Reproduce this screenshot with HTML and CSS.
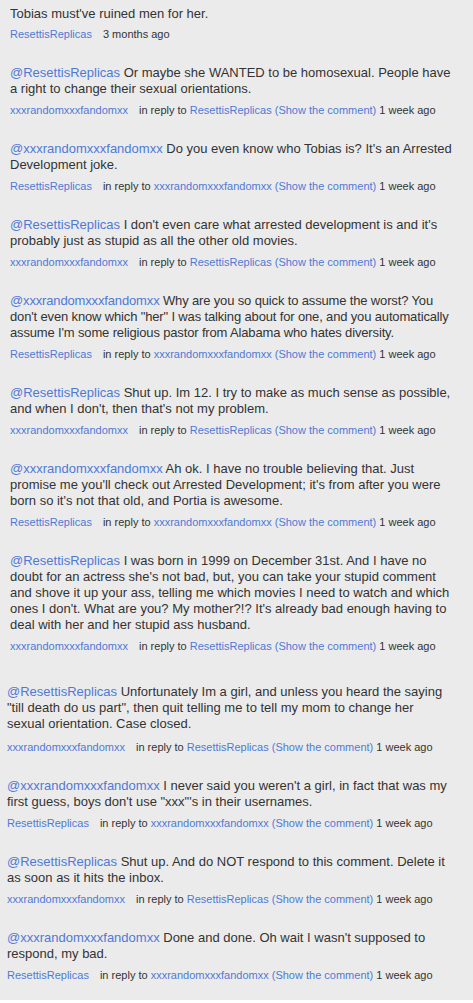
FILE: index.html
```html
<!DOCTYPE html>
<html>
<head>
<meta charset="utf-8">
<link rel="stylesheet" href="styles.css">
</head>
<body>
<div class="page">
  <section class="thread">
    <div class="comment first">
      <p class="text">Tobias must've ruined men for her.</p>
      <div class="meta"><a class="author">ResettisReplicas</a><span class="time">3 months ago</span></div>
    </div>
    <div class="comment">
      <p class="text"><a class="mention">@ResettisReplicas</a> Or maybe she WANTED to be homosexual. People have a right to change their sexual orientations.</p>
      <div class="meta"><a class="author">xxxrandomxxxfandomxx</a>in reply to <a>ResettisReplicas</a> <a>(Show the comment)</a> 1 week ago</div>
    </div>
    <div class="comment">
      <p class="text"><a class="mention">@xxxrandomxxxfandomxx</a> Do you even know who Tobias is? It's an Arrested Development joke.</p>
      <div class="meta"><a class="author">ResettisReplicas</a>in reply to <a>xxxrandomxxxfandomxx</a> <a>(Show the comment)</a> 1 week ago</div>
    </div>
    <div class="comment">
      <p class="text"><a class="mention">@ResettisReplicas</a> I don't even care what arrested development is and it's probably just as stupid as all the other old movies.</p>
      <div class="meta"><a class="author">xxxrandomxxxfandomxx</a>in reply to <a>ResettisReplicas</a> <a>(Show the comment)</a> 1 week ago</div>
    </div>
    <div class="comment">
      <p class="text tight"><a class="mention">@xxxrandomxxxfandomxx</a> Why are you so quick to assume the worst? You don't even know which "her" I was talking about for one, and you automatically assume I'm some religious pastor from Alabama who hates diversity.</p>
      <div class="meta"><a class="author">ResettisReplicas</a>in reply to <a>xxxrandomxxxfandomxx</a> <a>(Show the comment)</a> 1 week ago</div>
    </div>
    <div class="comment">
      <p class="text"><a class="mention">@ResettisReplicas</a> Shut up. Im 12. I try to make as much sense as possible, and when I don't, then that's not my problem.</p>
      <div class="meta"><a class="author">xxxrandomxxxfandomxx</a>in reply to <a>ResettisReplicas</a> <a>(Show the comment)</a> 1 week ago</div>
    </div>
    <div class="comment">
      <p class="text"><a class="mention">@xxxrandomxxxfandomxx</a> Ah ok. I have no trouble believing that. Just promise me you'll check out Arrested Development; it's from after you were born so it's not that old, and Portia is awesome.</p>
      <div class="meta"><a class="author">ResettisReplicas</a>in reply to <a>xxxrandomxxxfandomxx</a> <a>(Show the comment)</a> 1 week ago</div>
    </div>
    <div class="comment">
      <p class="text"><a class="mention">@ResettisReplicas</a> I was born in 1999 on December 31st. And I have no doubt for an actress she's not bad, but, you can take your stupid comment and shove it up your ass, telling me which movies I need to watch and which ones I don't. What are you? My mother?!? It's already bad enough having to deal with her and her stupid ass husband.</p>
      <div class="meta"><a class="author">xxxrandomxxxfandomxx</a>in reply to <a>ResettisReplicas</a> <a>(Show the comment)</a> 1 week ago</div>
    </div>
  </section>
  <section class="thread second">
    <div class="comment first loose">
      <p class="text"><a class="mention">@ResettisReplicas</a> Unfortunately Im a girl, and unless you heard the saying "till death do us part", then quit telling me to tell my mom to change her sexual orientation. Case closed.</p>
      <div class="meta"><a class="author">xxxrandomxxxfandomxx</a>in reply to <a>ResettisReplicas</a> <a>(Show the comment)</a> 1 week ago</div>
    </div>
    <div class="comment">
      <p class="text"><a class="mention">@xxxrandomxxxfandomxx</a> I never said you weren't a girl, in fact that was my first guess, boys don't use "xxx"'s in their usernames.</p>
      <div class="meta"><a class="author">ResettisReplicas</a>in reply to <a>xxxrandomxxxfandomxx</a> <a>(Show the comment)</a> 1 week ago</div>
    </div>
    <div class="comment">
      <p class="text"><a class="mention">@ResettisReplicas</a> Shut up. And do NOT respond to this comment. Delete it as soon as it hits the inbox.</p>
      <div class="meta"><a class="author">xxxrandomxxxfandomxx</a>in reply to <a>ResettisReplicas</a> <a>(Show the comment)</a> 1 week ago</div>
    </div>
    <div class="comment">
      <p class="text"><a class="mention">@xxxrandomxxxfandomxx</a> Done and done. Oh wait I wasn't supposed to respond, my bad.</p>
      <div class="meta"><a class="author">ResettisReplicas</a>in reply to <a>xxxrandomxxxfandomxx</a> <a>(Show the comment)</a> 1 week ago</div>
    </div>
  </section>
</div>
</body>
</html>
```

FILE: styles.css
```css
html, body {
  margin: 0;
  padding: 0;
  background: #ffffff;
}
.page {
  background: #ebebeb;
  height: 1000px;
  overflow: hidden;
  font-family: "Liberation Sans", Arial, sans-serif;
  color: #333333;
}
.thread {
  padding: 6px 0 0 10px;
  width: 446px;
}
.thread.second {
  padding: 30px 0 0 7px;
  width: 445px;
}
.comment {
  margin-top: 23px;
}
.comment.first {
  margin-top: 0;
}
.text {
  margin: 0;
  font-size: 13px;
  line-height: 16px;
}
.text.tight {
  letter-spacing: -0.15px;
}
.meta {
  margin-top: 5px;
  font-size: 11px;
  line-height: 16px;
}
.comment.first:not(.loose) .meta {
  margin-top: 4px;
}
.comment.loose .meta {
  margin-top: 7px;
}
a {
  color: #5079d6;
  text-decoration: none;
}
.author {
  margin-right: 11px;
}
```
